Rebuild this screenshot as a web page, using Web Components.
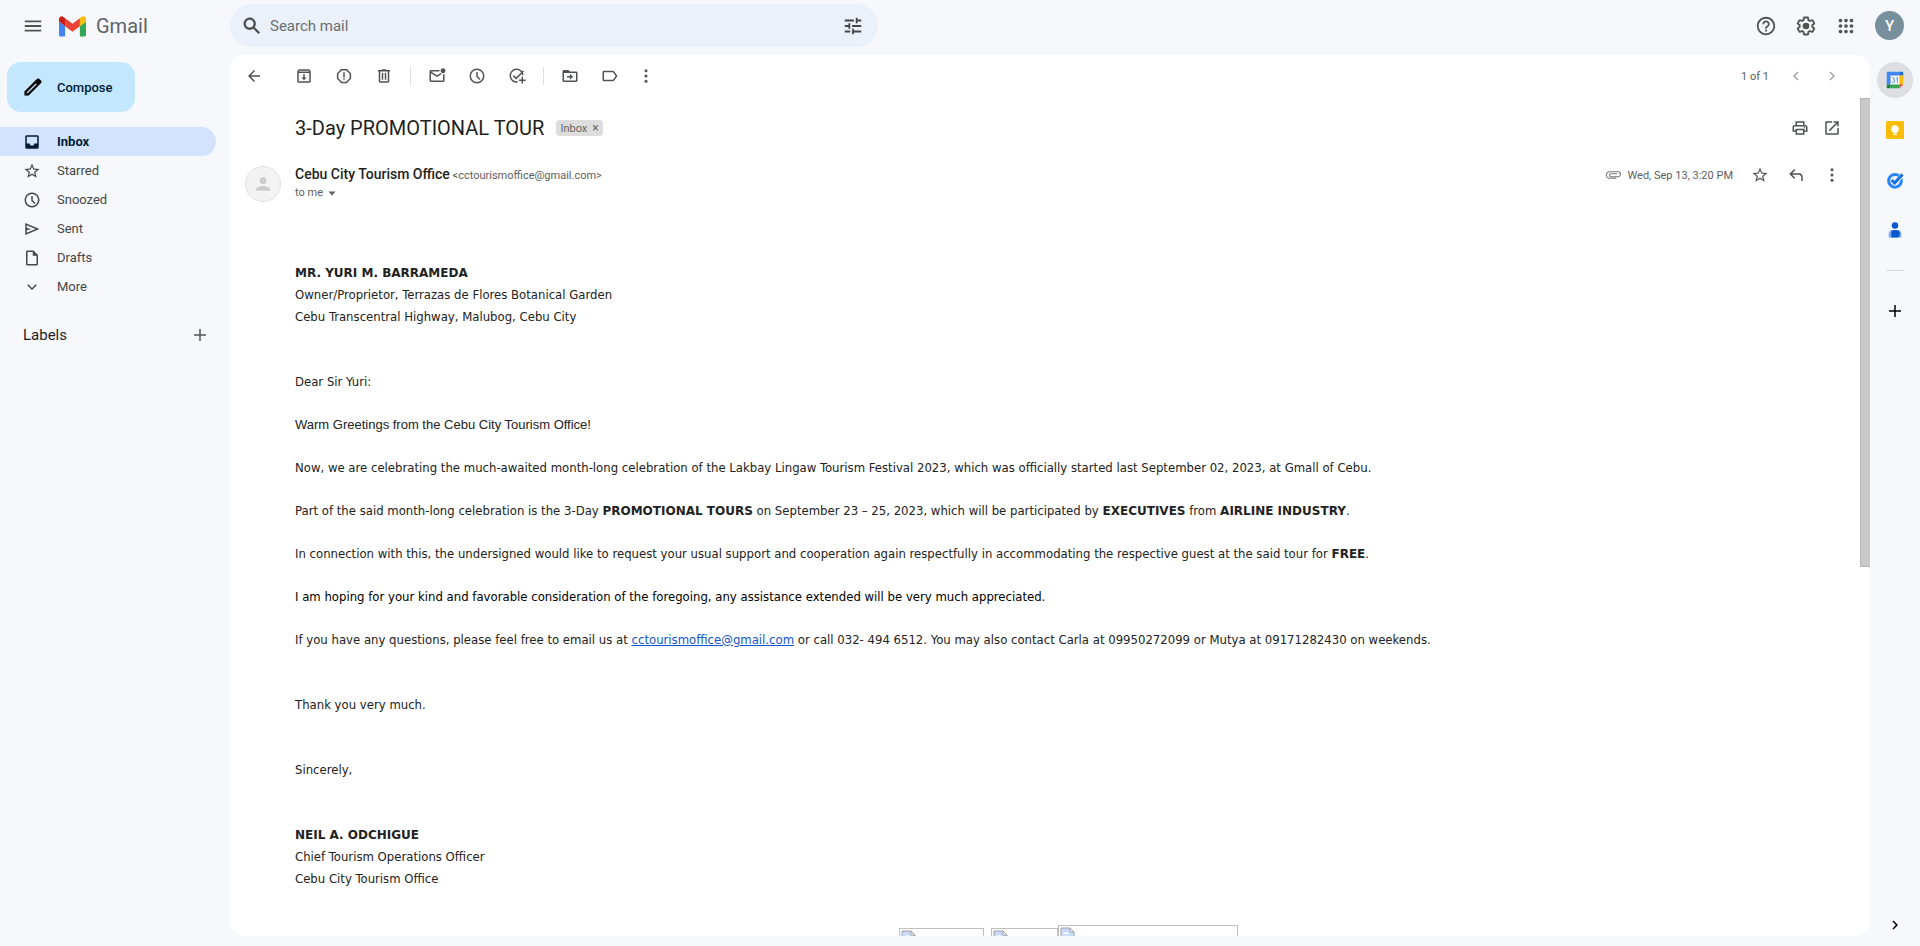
<!DOCTYPE html>
<html lang="en">
<head>
<meta charset="utf-8">
<title>3-Day PROMOTIONAL TOUR - Gmail</title>
<style>
  body {
    margin: 0;
    background: #f6f8fc;
    color: #444746;
    font-family: Roboto, "Liberation Sans", sans-serif;
    font-size: 13px;
  }
</style>
</head>
<body>
<mail-app></mail-app>

<script>
const icons = {
  menu: `<path d="M3 18h18v-2H3zm0-5h18v-2H3zm0-7v2h18V6z"/>`,
  search: `<path d="M20.49 19l-5.73-5.73C15.53 12.2 16 10.91 16 9.5 16 5.91 13.09 3 9.5 3S3 5.91 3 9.5 5.91 16 9.5 16c1.41 0 2.7-.47 3.77-1.24L19 20.49 20.49 19zM5 9.5C5 7.01 7.01 5 9.5 5S14 7.01 14 9.5 11.99 14 9.5 14 5 11.99 5 9.5z" stroke="currentColor" stroke-width=".4"/>`,
  tune: `<path d="M3 17v2h6v-2H3zM3 5v2h10V5H3zm10 16v-2h8v-2h-8v-2h-2v6h2zM7 9v2H3v2h4v2h2V9H7zm14 4v-2H11v2h10zm-6-4h2V7h4V5h-4V3h-2v6z"/>`,
  help: `<path d="M11 18h2v-2h-2v2zm1-16C6.48 2 2 6.48 2 12s4.48 10 10 10 10-4.48 10-10S17.52 2 12 2zm0 18c-4.41 0-8-3.59-8-8s3.59-8 8-8 8 3.59 8 8-3.59 8-8 8zm0-14c-2.21 0-4 1.79-4 4h2c0-1.1.9-2 2-2s2 .9 2 2c0 2-3 1.75-3 5h2c0-2.25 3-2.5 3-5 0-2.21-1.79-4-4-4z"/>`,
  settings: `<path d="M13.85 22.25h-3.7c-.74 0-1.36-.54-1.45-1.27l-.27-1.89c-.27-.14-.53-.29-.79-.46l-1.8.72c-.7.26-1.47-.03-1.81-.65L2.2 15.53c-.35-.66-.2-1.44.36-1.88l1.53-1.19c-.01-.15-.02-.3-.02-.46 0-.15.01-.31.02-.46l-1.52-1.19c-.59-.45-.74-1.26-.37-1.88l1.85-3.19c.34-.62 1.11-.9 1.79-.63l1.81.73c.26-.17.52-.32.78-.46l.27-1.91c.09-.7.71-1.25 1.44-1.25h3.7c.74 0 1.36.54 1.45 1.27l.27 1.89c.27.14.53.29.79.46l1.8-.72c.71-.26 1.48.03 1.82.65l1.84 3.18c.36.66.2 1.44-.36 1.88l-1.52 1.19c.01.15.02.3.02.46s-.01.31-.02.46l1.52 1.19c.56.45.72 1.23.37 1.86l-1.86 3.22c-.34.62-1.11.9-1.8.63l-1.8-.72c-.26.17-.52.32-.78.46l-.27 1.91c-.1.68-.72 1.22-1.46 1.22zm-3.23-2h2.76l.37-2.55.53-.22c.44-.18.88-.44 1.34-.78l.45-.34 2.38.96 1.38-2.4-2.03-1.58.07-.56c.03-.26.06-.51.06-.78s-.03-.53-.06-.78l-.07-.56 2.03-1.58-1.39-2.4-2.39.96-.45-.35c-.42-.32-.87-.58-1.33-.77l-.52-.22-.37-2.55h-2.76l-.37 2.55-.53.21c-.44.19-.88.44-1.34.79l-.45.33-2.38-.95-1.39 2.39 2.03 1.58-.07.56a7 7 0 0 0-.06.79c0 .26.02.53.06.78l.07.56-2.03 1.58 1.38 2.4 2.39-.96.45.35c.43.33.86.58 1.33.77l.53.22.38 2.55z"/><circle cx="12" cy="12" r="3.6"/>`,
  apps: `<path d="M6 8c1.1 0 2-.9 2-2s-.9-2-2-2-2 .9-2 2 .9 2 2 2zm6 12c1.1 0 2-.9 2-2s-.9-2-2-2-2 .9-2 2 .9 2 2 2zm-6 0c1.1 0 2-.9 2-2s-.9-2-2-2-2 .9-2 2 .9 2 2 2zm0-6c1.1 0 2-.9 2-2s-.9-2-2-2-2 .9-2 2 .9 2 2 2zm6 0c1.1 0 2-.9 2-2s-.9-2-2-2-2 .9-2 2 .9 2 2 2zm4-8c0 1.1.9 2 2 2s2-.9 2-2-.9-2-2-2-2 .9-2 2zm-4 2c1.1 0 2-.9 2-2s-.9-2-2-2-2 .9-2 2 .9 2 2 2zm6 6c1.1 0 2-.9 2-2s-.9-2-2-2-2 .9-2 2 .9 2 2 2zm0 6c1.1 0 2-.9 2-2s-.9-2-2-2-2 .9-2 2 .9 2 2 2z"/>`,
  pencil: `<path d="M20.41 4.94l-1.35-1.35c-.78-.78-2.05-.78-2.83 0L3 16.82V21h4.18L20.41 7.77c.79-.78.79-2.05 0-2.83zM6.41 19.06L5 19v-1.36l9.82-9.82 1.41 1.41z" stroke="currentColor" stroke-width=".6"/>`,
  inbox: `<path d="M19 3H5c-1.1 0-2 .9-2 2v14c0 1.1.9 2 2 2h14c1.1 0 2-.9 2-2V5c0-1.1-.9-2-2-2zm0 11h-4c0 1.66-1.34 3-3 3s-3-1.34-3-3H5V5h14z" fill-rule="evenodd"/>`,
  star: `<path d="M22 9.24l-7.19-.62L12 2 9.19 8.63 2 9.24l5.46 4.73L5.82 21 12 17.27 18.18 21l-1.63-7.03L22 9.24zM12 15.4l-3.76 2.27 1-4.28-3.32-2.88 4.38-.38L12 6.1l1.71 4.04 4.38.38-3.32 2.88 1 4.28L12 15.4z"/>`,
  clock: `<path d="M12 2a10 10 0 1 0 0 20 10 10 0 0 0 0-20zm0 18a8 8 0 1 1 0-16 8 8 0 0 1 0 16zm1-13.500h-2V13l4.300 4.300 1.400-1.400-3.700-3.700z"/>`,
  sent: `<path d="M3 4v16l19-8zm2 3l11.850 5L5 17v-3.500l6-1.500-6-1.500z"/>`,
  draft: `<path d="M14 2H6c-1.100 0-2 .9-2 2v16c0 1.100.9 2 2 2h12c1.100 0 2-.9 2-2V8zm4 18H6V4h7v5h5z"/>`,
  down: `<path d="M12 16l-6.400-6.400L7 8.200l5 5 5-5 1.400 1.400z"/>`,
  plus: `<path d="M20 13h-7v7h-2v-7H4v-2h7V4h2v7h7z"/>`,
  back: `<path d="M20 11H7.830l5.590-5.590L12 4l-8 8 8 8 1.410-1.410L7.830 13H20z"/>`,
  archive: `<path d="M19 3H5L3 5.500V19c0 1.100.9 2 2 2h14c1.100 0 2-.9 2-2V5.500zM5 19V8h14v11zM5 6l.7-1h12.600l.7 1zm6 3.500V14H8.500l3.500 3.500 3.500-3.500H13V9.500z"/>`,
  spam: `<path d="M8.300 2.500h7.400l5.800 5.800v7.400l-5.800 5.800H8.300l-5.800-5.800V8.300zm.8 2L4.500 9.100v5.800l4.600 4.600h5.800l4.600-4.600V9.100l-4.600-4.600zM11 7h2v6.500h-2zm0 8h2v2h-2z"/>`,
  trash: `<path d="M15 4V3H9v1H4v2h1v13c0 1.100.9 2 2 2h10c1.100 0 2-.9 2-2V6h1V4zm2 15H7V6h10zM9 8h2v9H9zm4 0h2v9h-2z"/>`,
  unread: `<path d="M22 9.500V18c0 1.100-.9 2-2 2H4c-1.100 0-2-.9-2-2V6c0-1.100.9-2 2-2h11.200v2H4l8 5 4.800-3 1.600 1.400L12 13.300 4 8.200V18h16V9.800z"/><circle cx="20" cy="5" r="3.300"/>`,
  task: `<path d="M21 11a9.500 9.500 0 1 0-8 10v-2.100A7.500 7.500 0 1 1 18.900 11z"/><path d="M6.500 12.200l1.400-1.400 3 3 9.200-9.200 1.400 1.400L10.900 16.600zM18 13v3.500h-3.500v2H18V22h2v-3.500h3.500v-2H20V13z"/>`,
  move: `<path d="M20 6h-8l-2-2H4c-1.100 0-2 .9-2 2v12c0 1.100.9 2 2 2h16c1.100 0 2-.9 2-2V8c0-1.100-.9-2-2-2zm0 12H4V8h16zM12 9v3H8v2h4v3l4-4z"/>`,
  label: `<path d="M16 5H4c-1.100 0-2 .9-2 2v10c0 1.100.9 2 2 2h12c.7 0 1.300-.3 1.700-.9L22 12l-4.300-6.100C17.300 5.300 16.700 5 16 5zm0 12H4V7h12l3.550 5z"/>`,
  more: `<circle cx="12" cy="5" r="2"/><circle cx="12" cy="12" r="2"/><circle cx="12" cy="19" r="2"/>`,
  left: `<path d="M15.400 7.400L14 6l-6 6 6 6 1.400-1.400L10.800 12z"/>`,
  right: `<path d="M8.600 16.600L10 18l6-6-6-6-1.400 1.400 4.600 4.600z"/>`,
  print: `<path d="M19 8h-1V3H6v5H5c-1.660 0-3 1.340-3 3v6h4v4h12v-4h4v-6c0-1.660-1.340-3-3-3zM8 5h8v3H8zm8 14H8v-4h8zm2-4v-2H6v2H4v-4c0-.55.45-1 1-1h14c.55 0 1 .45 1 1v4z"/><circle cx="18" cy="11.500" r="1"/>`,
  open: `<path d="M19 19H5V5h7V3H4c-.6 0-1 .4-1 1v16c0 .6.4 1 1 1h16c.6 0 1-.4 1-1v-8h-2zM14 3v2h3.590l-9.830 9.830 1.410 1.410L19 6.410V10h2V3z"/>`,
  reply: `<path d="M9.500 4L11 5.400 6.900 9.500H16c3 0 5 2 5 5V20h-2v-5c0-2.100-1.400-3.500-3.500-3.500H6.900l4.100 4.100L9.500 17 3 10.500z"/>`,
  clip: `<path d="M17 17H7a5 5 0 0 1 0-10h12.500a3.500 3.500 0 0 1 0 7.500H9a2 2 0 0 1 0-4.500h9" fill="none" stroke="currentColor" stroke-width="1.600"/>`,
  person: `<circle cx="12" cy="7.500" r="4.500"/><path d="M2.500 21v-1.500C2.500 16 8 14.500 12 14.500s9.500 1.500 9.500 5V21z"/>`,
  caret: `<path d="M5 9h14l-7 8z"/>`,
  gmail: `<g transform="translate(0 3) scale(.2727) translate(-52 -42)"><path fill="#4285f4" d="M58 108h14V74L52 59v43c0 3.320 2.690 6 6 6"/><path fill="#34a853" d="M120 108h14c3.320 0 6-2.690 6-6V59l-20 15"/><path fill="#fbbc04" d="M120 48v26l20-15v-8c0-7.420-8.470-11.650-14.400-7.200"/><path fill="#ea4335" d="M72 74V48l24 18 24-18v26L96 92"/><path fill="#c5221f" d="M52 51v8l20 15V48l-5.600-4.200c-5.940-4.450-14.400-.22-14.400 7.200"/></g>`,
  calendar: `<path fill="#fff" d="M6 6h12v12H6z"/><path fill="#4285f4" d="M2.500 1H18v5H6v12H1V2.500C1 1.700 1.700 1 2.500 1z"/><path fill="#1967d2" d="M18 1h3.500c.8 0 1.500.7 1.500 1.500V6h-5z"/><path fill="#fbbc04" d="M18 6h5v12h-5z"/><path fill="#34a853" d="M6 18h12v5H6z"/><path fill="#188038" d="M1 18h5v5H2.500c-.8 0-1.500-.7-1.500-1.500z"/><path fill="#ea4335" d="M18 18h5l-5 5z"/><path fill="none" stroke="#4285f4" stroke-width="1.300" d="M8 9.600c.5-1.300 3.300-1.200 3.300.6 0 1-.8 1.600-1.800 1.600 1.200 0 2 .7 2 1.800 0 2.200-3.300 2.300-3.800.5M13.300 10l1.900-1.200v7"/>`,
  keep: `<rect width="24" height="24" rx="2" fill="#fbbc04"/><circle cx="12" cy="10.500" r="5" fill="#fff"/><path fill="#fff" d="M9.500 13h5v2.500h-5zM9.500 16.500h5v2h-5z"/>`,
  tasks: `<circle cx="12" cy="13" r="8.500" fill="none" stroke="#2684fc" stroke-width="4"/><path d="M8 12l4 4L22 5" fill="none" stroke="#f6f8fc" stroke-width="6"/><path d="M7.500 12l4 4L22 4.500" fill="none" stroke="#1a73e8" stroke-width="4"/>`,
  contacts: `<circle cx="12" cy="6" r="4.300" fill="#0b57d0"/><path fill="#7baaf7" d="M3.500 22v-4c0-3.500 2-6 5-6h7c3 0 5 2.500 5 6v4z"/><path fill="#0b57d0" d="M7 22v-6c0-2.500 1.500-4 3.500-4h3c3 0 5 2 5 4.500 0 3-1.500 5.500-4 5.500z"/>`,
};

class MailIcon extends HTMLElement {
  connectedCallback() {
    this.attachShadow({ mode: "open" });
    this.shadowRoot.innerHTML = `
      <style>
        :host { display: block; flex: none; width: var(--icon-size, 18px); height: var(--icon-size, 18px); }
        svg { display: block; width: 100%; height: 100%; fill: currentColor; }
      </style>
      <svg viewBox="0 0 24 24" aria-hidden="true">${icons[this.getAttribute("name")]}</svg>
    `;
  }
}

class IconButton extends HTMLElement {
  connectedCallback() {
    this.attachShadow({ mode: "open" });
    this.shadowRoot.innerHTML = `
      <style>
        :host { display: block; flex: none; width: 36px; height: 36px; color: #505352; }
        button {
          display: grid;
          place-items: center;
          width: 100%;
          height: 100%;
          padding: 0;
          border: none;
          border-radius: 18px;
          background: var(--button-bg, none);
          color: inherit;
          cursor: pointer;
        }
      </style>
      <button type="button" aria-label="${this.getAttribute("label")}">
        <mail-icon name="${this.getAttribute("icon")}"></mail-icon>
      </button>
    `;
  }
}

class MailHeader extends HTMLElement {
  connectedCallback() {
    this.attachShadow({ mode: "open" });
    this.shadowRoot.innerHTML = `
      <style>
        :host { display: flex; align-items: flex-start; height: 55px; padding: 4px 16px 0 0; box-sizing: border-box; }
        .brand { display: flex; align-items: center; flex: none; width: 215px; height: 44px; padding-left: 15px; }
        .brand icon-button { --icon-size: 22px; }
        .logo { display: flex; align-items: center; gap: 10px; padding-left: 8px; color: #5f6368; font-size: 20px; text-decoration: none; }
        .logo mail-icon { --icon-size: 27px; }
        form {
          display: flex;
          align-items: center;
          flex: 0 1 648px;
          height: 43px;
          padding: 0 7px 0 4px;
          box-sizing: border-box;
          border-radius: 22px;
          background: #eaf1fb;
        }
        form icon-button { --icon-size: 22px; color: #444746; }
        input {
          flex: 1;
          min-width: 0;
          padding: 0;
          border: none;
          outline: none;
          background: none;
          font: 15px Roboto, sans-serif;
          color: #444746;
        }
        input::placeholder { color: #6b6f72; opacity: 1; }
        .account { display: flex; align-items: center; gap: 4px; height: 43px; margin-left: auto; }
        .account icon-button { --icon-size: 22px; }
        .avatar {
          width: 29px;
          height: 29px;
          margin-left: 7px;
          padding: 0;
          border: none;
          border-radius: 50%;
          background: #78909c;
          color: #fff;
          font: 500 15px Roboto, sans-serif;
        }
      </style>
      <div class="brand">
        <icon-button icon="menu" label="Main menu"></icon-button>
        <a class="logo" href="#inbox"><mail-icon name="gmail"></mail-icon>Gmail</a>
      </div>
      <form role="search">
        <icon-button icon="search" label="Search"></icon-button>
        <input type="text" placeholder="Search mail" aria-label="Search mail">
        <icon-button icon="tune" label="Show search options"></icon-button>
      </form>
      <div class="account">
        <icon-button icon="help" label="Support"></icon-button>
        <icon-button icon="settings" label="Settings"></icon-button>
        <icon-button icon="apps" label="Google apps"></icon-button>
        <button class="avatar" type="button">Y</button>
      </div>
    `;
  }
}

class NavItem extends HTMLElement {
  connectedCallback() {
    this.attachShadow({ mode: "open" });
    this.shadowRoot.innerHTML = `
      <style>
        :host { display: block; }
        a {
          display: flex;
          align-items: center;
          gap: 16px;
          height: 29px;
          padding-left: 23px;
          border-radius: 0 15px 15px 0;
          color: #444746;
          text-decoration: none;
        }
        :host([active]) a { background: #d3e3fd; color: #001d35; font-weight: 700; }
      </style>
      <a href="#"><mail-icon name="${this.getAttribute("icon")}"></mail-icon><slot></slot></a>
    `;
  }
}

class SideNav extends HTMLElement {
  connectedCallback() {
    this.attachShadow({ mode: "open" });
    this.shadowRoot.innerHTML = `
      <style>
        :host { display: block; padding: 7px 14px 0 0; }
        .compose {
          display: flex;
          align-items: center;
          gap: 13px;
          width: 128px;
          height: 50px;
          margin: 0 0 15px 7px;
          padding: 0 0 0 15px;
          border: none;
          border-radius: 14px;
          background: #c2e7ff;
          color: #001d35;
          font: 500 13px Roboto, sans-serif;
        }
        .compose mail-icon { --icon-size: 22px; color: #000; }
        .labels { display: flex; align-items: center; justify-content: space-between; height: 36px; margin-top: 16px; padding-left: 23px; }
        h2 { margin: 0; font-size: 15px; font-weight: 400; color: #1f1f1f; }
        .labels icon-button { width: 32px; }
      </style>
      <button class="compose" type="button"><mail-icon name="pencil"></mail-icon>Compose</button>
      <nav>
        <nav-item icon="inbox" active>Inbox</nav-item>
        <nav-item icon="star">Starred</nav-item>
        <nav-item icon="clock">Snoozed</nav-item>
        <nav-item icon="sent">Sent</nav-item>
        <nav-item icon="draft">Drafts</nav-item>
        <nav-item icon="down">More</nav-item>
      </nav>
      <div class="labels">
        <h2>Labels</h2>
        <icon-button icon="plus" label="Create new label"></icon-button>
      </div>
    `;
  }
}

class MailToolbar extends HTMLElement {
  connectedCallback() {
    this.attachShadow({ mode: "open" });
    this.shadowRoot.innerHTML = `
      <style>
        :host { display: flex; align-items: flex-start; flex: none; height: 40px; padding: 3px 20px 0 6px; font-size: 11px; color: #5e5e5e; }
        .group { display: flex; gap: 4px; }
        .back { margin-right: 14px; }
        .line { width: 1px; height: 18px; margin: 9px 8px; background: #dddfe1; }
        .dots { width: 28px; }
        .pager { display: flex; align-items: center; margin-left: auto; }
        .pager span { margin-right: 9px; }
        .pager icon-button { color: #a6a8a8; }
      </style>
      <icon-button class="back" icon="back" label="Back to Inbox"></icon-button>
      <div class="group">
        <icon-button icon="archive" label="Archive"></icon-button>
        <icon-button icon="spam" label="Report spam"></icon-button>
        <icon-button icon="trash" label="Delete"></icon-button>
      </div>
      <div class="line"></div>
      <div class="group">
        <icon-button icon="unread" label="Mark as unread"></icon-button>
        <icon-button icon="clock" label="Snooze"></icon-button>
        <icon-button icon="task" label="Add to Tasks"></icon-button>
      </div>
      <div class="line"></div>
      <div class="group">
        <icon-button icon="move" label="Move to"></icon-button>
        <icon-button icon="label" label="Labels"></icon-button>
        <icon-button class="dots" icon="more" label="More"></icon-button>
      </div>
      <div class="pager">
        <span>1 of 1</span>
        <icon-button icon="left" label="Newer"></icon-button>
        <icon-button icon="right" label="Older"></icon-button>
      </div>
    `;
  }
}

// Frame the browser shows when an inline image fails to load
class MissingImage extends HTMLElement {
  connectedCallback() {
    this.attachShadow({ mode: "open" });
    this.shadowRoot.innerHTML = `
      <style>
        :host { display: block; box-sizing: border-box; padding: 1px; border: 1px solid #c0c0c0; }
        svg { display: block; }
      </style>
      <svg width="16" height="16" viewBox="0 0 16 16">
        <path d="M1 1h9l4 4v10H1z" fill="#c9dafb" stroke="#a0a0a0"/>
        <path d="M10 1v4h4z" fill="#fff" stroke="#a0a0a0"/>
        <path d="M3 7c0-1.500 1.500-1.500 2-1 .5-1.500 2.500-1.500 3 .3 1 0 1 .7 1 1z" fill="#fff"/>
        <path d="M2 14c2-5 8-5 10-1l1 1z" fill="#4fa548"/>
      </svg>
    `;
  }
}

class MailMessage extends HTMLElement {
  connectedCallback() {
    this.attachShadow({ mode: "open" });
    this.shadowRoot.innerHTML = `
      <style>
        :host { display: block; padding: 12px 10px 0 65px; }
        .subject { display: flex; align-items: center; height: 36px; }
        h1 { margin: 0 12px 0 0; font: 400 20px Roboto, sans-serif; color: #1f1f1f; }
        .chip { display: flex; align-items: center; gap: 5px; height: 16px; padding: 0 4px; border-radius: 4px; background: #ddd; color: #666; font-size: 11px; }
        .chip button { padding: 0; border: none; background: none; color: inherit; font: 12px Roboto, sans-serif; }
        .actions { display: flex; align-items: center; margin-left: auto; }
        .subject icon-button { width: 32px; }
        .subject .actions { padding-right: 2px; }
        .sender { display: flex; height: 36px; margin: 20px 0 60px -50px; }
        .avatar { display: grid; place-items: center; flex: none; width: 36px; height: 36px; margin-right: 14px; box-sizing: border-box; border: 1px solid #e0e0e0; border-radius: 50%; background: #f3f3f3; color: #ccc; }
        .from { line-height: 17px; font-size: 11px; color: #5e5e5e; }
        .from strong { font-size: 14px; font-weight: 500; color: #1f1f1f; }
        .to { display: flex; align-items: center; gap: 3px; padding: 0; border: none; background: none; color: inherit; font: 11px/17px Roboto, sans-serif; }
        .to mail-icon { --icon-size: 12px; }
        .sender .actions { height: 18px; font-size: 11px; color: #5e5e5e; }
        .actions mail-icon { --icon-size: 16px; margin-right: 6px; color: #777; }
        .actions time { margin-right: 9px; }
        .body {
          padding-right: 8px;
          color: #222;
          font-family: "DejaVu Sans Condensed", "DejaVu Sans", sans-serif;
          font-size: 13px;
          line-height: 22px;
        }
        .body p { margin: 0 0 21px; }
        .body p.wide { margin-bottom: 43px; }
        .body .arial { font-family: "Liberation Sans", Arial, sans-serif; }
        .body .dark { color: #000; }
        .body b { font-family: "DejaVu Sans", sans-serif; font-size: 12px; }
        .body a { color: #15c; }
        .images { display: flex; align-items: flex-end; justify-content: center; padding-top: 14px; }
        .images missing-image { width: 85px; height: 87px; margin-right: 7px; }
        .images .narrow { width: 67px; margin-right: 0; }
        .images .large { width: 180px; height: 90px; margin-right: 0; }
      </style>
      <div class="subject">
        <h1>3-Day PROMOTIONAL TOUR</h1>
        <span class="chip">Inbox <button type="button" aria-label="Remove label Inbox">×</button></span>
        <div class="actions">
          <icon-button icon="print" label="Print all"></icon-button>
          <icon-button icon="open" label="In new window"></icon-button>
        </div>
      </div>
      <div class="sender">
        <div class="avatar"><mail-icon name="person"></mail-icon></div>
        <div class="from">
          <strong>Cebu City Tourism Office</strong> &lt;cctourismoffice@gmail.com&gt;
          <button class="to" type="button">to me <mail-icon name="caret"></mail-icon></button>
        </div>
        <div class="actions">
          <mail-icon name="clip"></mail-icon>
          <time>Wed, Sep 13, 3:20 PM</time>
          <icon-button icon="star" label="Not starred"></icon-button>
          <icon-button icon="reply" label="Reply"></icon-button>
          <icon-button icon="more" label="More"></icon-button>
        </div>
      </div>
      <div class="body">
        <p class="wide">
          <b>MR. YURI M. BARRAMEDA</b><br>
          Owner/Proprietor, Terrazas de Flores Botanical Garden<br>
          Cebu Transcentral Highway, Malubog, Cebu City
        </p>
        <p>Dear Sir Yuri:</p>
        <p class="arial">Warm Greetings from the Cebu City Tourism Office!</p>
        <p>Now, we are celebrating the much-awaited month-long celebration of the Lakbay Lingaw Tourism Festival 2023, which was officially started last September 02, 2023, at Gmall of Cebu.</p>
        <p>Part of the said month-long celebration is the 3-Day <b>PROMOTIONAL TOURS</b> on September 23 – 25, 2023, which will be participated by <b>EXECUTIVES</b> from <b>AIRLINE INDUSTRY</b>.</p>
        <p>In connection with this, the undersigned would like to request your usual support and cooperation again respectfully in accommodating the respective guest at the said tour for <b>FREE</b>.</p>
        <p class="dark">I am hoping for your kind and favorable consideration of the foregoing, any assistance extended will be very much appreciated.</p>
        <p class="wide">If you have any questions, please feel free to email us at <a href="mailto:cctourismoffice@gmail.com">cctourismoffice@gmail.com</a> or call 032- 494 6512. You may also contact Carla at 09950272099 or Mutya at 09171282430 on weekends.</p>
        <p class="wide">Thank you very much.</p>
        <p class="wide">Sincerely,</p>
        <p>
          <b>NEIL A. ODCHIGUE</b><br>
          Chief Tourism Operations Officer<br>
          Cebu City Tourism Office
        </p>
        <div class="images">
          <missing-image></missing-image>
          <missing-image class="narrow"></missing-image>
          <missing-image class="large"></missing-image>
        </div>
      </div>
    `;
  }
}

class SideRail extends HTMLElement {
  connectedCallback() {
    this.attachShadow({ mode: "open" });
    this.shadowRoot.innerHTML = `
      <style>
        :host { display: flex; flex-direction: column; align-items: center; gap: 14px; padding: 7px 0 3px; box-sizing: border-box; }
        .selected { --button-bg: #dedfe3; }
        hr { width: 18px; margin: 8px 0; border: none; border-top: 1px solid #dadce0; }
        .dark { --icon-size: 18px; color: #000; }
        .hide { margin-top: auto; color: #000; }
      </style>
      <icon-button class="selected" icon="calendar" label="Calendar"></icon-button>
      <icon-button icon="keep" label="Keep"></icon-button>
      <icon-button icon="tasks" label="Tasks"></icon-button>
      <icon-button icon="contacts" label="Contacts"></icon-button>
      <hr>
      <icon-button class="dark" icon="plus" label="Get add-ons"></icon-button>
      <icon-button class="hide" icon="right" label="Hide side panel"></icon-button>
    `;
  }
}

class MailApp extends HTMLElement {
  connectedCallback() {
    this.attachShadow({ mode: "open" });
    this.shadowRoot.innerHTML = `
      <style>
        :host { display: grid; grid-template: auto minmax(0, 1fr) / 230px minmax(0, 1fr) 50px; height: 100vh; }
        mail-header { grid-column: 1 / -1; }
        main { display: flex; flex-direction: column; margin-bottom: 10px; border-radius: 14px; background: #fff; overflow: hidden; }
        .view { display: flex; flex: 1; min-height: 0; }
        mail-message { flex: 1; min-width: 0; overflow: hidden; }
        .scroll { width: 10px; }
        .thumb { height: 56%; box-sizing: border-box; border: solid #b5b5b5; border-width: 1px 0 1px 1px; background: #c9c9c9; }
      </style>
      <mail-header></mail-header>
      <side-nav></side-nav>
      <main>
        <mail-toolbar></mail-toolbar>
        <div class="view">
          <mail-message></mail-message>
          <div class="scroll"><div class="thumb"></div></div>
        </div>
      </main>
      <side-rail></side-rail>
    `;
  }
}

customElements.define("mail-icon", MailIcon);
customElements.define("icon-button", IconButton);
customElements.define("mail-header", MailHeader);
customElements.define("nav-item", NavItem);
customElements.define("side-nav", SideNav);
customElements.define("mail-toolbar", MailToolbar);
customElements.define("missing-image", MissingImage);
customElements.define("mail-message", MailMessage);
customElements.define("side-rail", SideRail);
customElements.define("mail-app", MailApp);
</script>
</body>
</html>
